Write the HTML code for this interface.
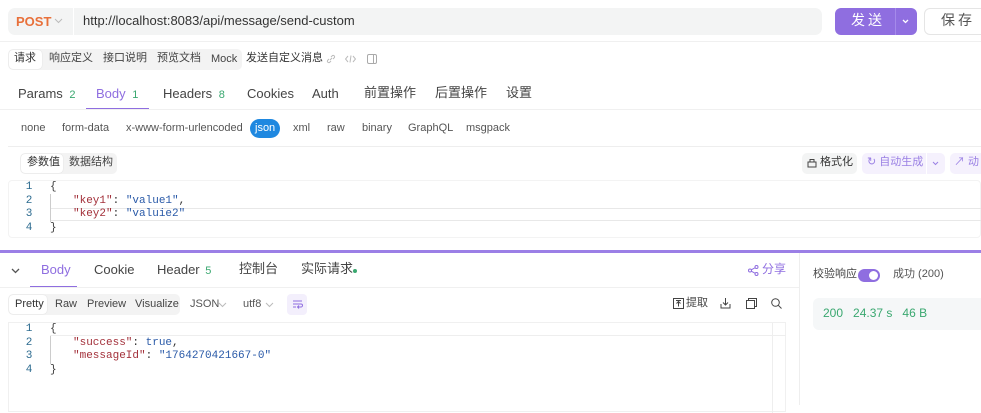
<!DOCTYPE html>
<html><head><meta charset="utf-8"><style>
*{margin:0;padding:0;box-sizing:border-box}
body{width:981px;height:405px;overflow:hidden;background:#fff;font-family:"Liberation Sans","Noto Sans CJK SC",sans-serif;color:#333;position:relative;font-size:12px}
.a{position:absolute;white-space:nowrap;line-height:1.2}
.mono{font-family:"Liberation Mono","DejaVu Sans Mono",monospace;font-size:11px}
.ln{color:#2b6a8f;width:20px;text-align:center}
.k{color:#a3303a}.s{color:#2a5aa8}
.g{color:#3a3a3a}
svg{display:block}
</style></head><body>
<!-- url bar -->
<div class="a" style="left:8px;top:8px;width:814px;height:27px;background:#f3f4f4;border-radius:7px"></div>
<div class="a" style="left:16px;top:14px;font-weight:bold;color:#e8703a;font-size:13px">POST</div>
<svg class="a" style="left:54px;top:18px" width="9" height="6"><path d="M1 1l3.5 3.5L8 1" stroke="#bbb" fill="none"/></svg>
<div class="a" style="left:73px;top:8px;width:1px;height:27px;background:#fff"></div>
<div class="a" style="left:83px;top:13px;font-size:13px;color:#333">http://localhost:8083/api/message/send-custom</div>
<div class="a" style="left:835px;top:8px;width:82px;height:27px;background:#8f6ee0;border-radius:6px"></div>
<div class="a" style="left:895px;top:8px;width:1px;height:27px;background:#a58aea"></div>
<div class="a" style="left:851px;top:12px;color:#fff;font-size:14px;letter-spacing:3px">发送</div>
<svg class="a" style="left:902px;top:19px" width="7" height="5"><path d="M1 1l2.5 2.5L6 1" stroke="#fff" fill="none" stroke-width="1.3"/></svg>
<div class="a" style="left:924px;top:8px;width:70px;height:27px;border:1px solid #e5e5e5;border-radius:6px"></div>
<div class="a" style="left:941px;top:12px;color:#555;font-size:14px;letter-spacing:3px">保存</div>
<div class="a" style="left:0;top:41px;width:981px;height:1px;background:#f0f0f0"></div>
<!-- sub tabs -->
<div class="a" style="left:8px;top:49px;width:234px;height:21px;background:#f3f3f3;border-radius:5px"></div>
<div class="a" style="left:9px;top:50px;width:33px;height:19px;background:#fff;border-radius:4px;box-shadow:0 0 1px #ccc"></div>
<div class="a" style="left:14px;top:52px;font-size:11px">请求</div>
<div class="a" style="left:49px;top:52px;font-size:11px;color:#444">响应定义</div>
<div class="a" style="left:103px;top:52px;font-size:11px;color:#444">接口说明</div>
<div class="a" style="left:157px;top:52px;font-size:11px;color:#444">预览文档</div>
<div class="a" style="left:211px;top:53px;font-size:11px;color:#444">Mock</div>
<div class="a" style="left:246px;top:52px;font-size:11px;color:#333">发送自定义消息</div>
<svg class="a" style="left:326px;top:54px" width="10" height="10"><path d="M4 6l2-2M3 5L1.5 6.5a1.5 1.5 0 0 0 2 2L5 7M7 5l1.5-1.5a1.5 1.5 0 0 0-2-2L5 3" stroke="#bbb" fill="none"/></svg>
<svg class="a" style="left:345px;top:54px" width="11" height="10"><path d="M3 2L0.5 5L3 8M8 2l2.5 3L8 8M6 1.5L5 8.5" stroke="#bbb" fill="none"/></svg>
<div class="a" style="left:367px;top:54px;width:10px;height:10px;border:1px solid #aaa;border-radius:2px"></div>
<div class="a" style="left:373px;top:54px;width:1px;height:10px;background:#aaa"></div>
<!-- main tabs -->
<div class="a" style="left:18px;top:86px;font-size:13px;color:#444">Params <span style="color:#3aa870;font-size:11px;margin-left:3px">2</span></div>
<div class="a" style="left:96px;top:86px;font-size:13px;color:#8f6ee0">Body <span style="color:#3aa870;font-size:11px;margin-left:3px">1</span></div>
<div class="a" style="left:163px;top:86px;font-size:13px;color:#444">Headers <span style="color:#3aa870;font-size:11px;margin-left:3px">8</span></div>
<div class="a" style="left:247px;top:86px;font-size:13px;color:#444">Cookies</div>
<div class="a" style="left:312px;top:86px;font-size:13px;color:#444">Auth</div>
<div class="a" style="left:364px;top:85px;font-size:13px;color:#444">前置操作</div>
<div class="a" style="left:435px;top:85px;font-size:13px;color:#444">后置操作</div>
<div class="a" style="left:506px;top:85px;font-size:13px;color:#444">设置</div>
<div class="a" style="left:86px;top:108px;width:63px;height:2px;background:#8f6ee0"></div>
<div class="a" style="left:0;top:109px;width:981px;height:1px;background:#f0f0f0"></div>
<!-- body types -->
<div class="a" style="left:250px;top:119px;width:30px;height:19px;background:#1f88e0;border-radius:10px"></div>
<div class="a" style="left:21px;top:122px;font-size:11px;color:#555">none</div>
<div class="a" style="left:62px;top:122px;font-size:11px;color:#555">form-data</div>
<div class="a" style="left:126px;top:122px;font-size:11px;color:#555">x-www-form-urlencoded</div>
<div class="a" style="left:255px;top:122px;font-size:11px;color:#fff">json</div>
<div class="a" style="left:293px;top:122px;font-size:11px;color:#555">xml</div>
<div class="a" style="left:327px;top:122px;font-size:11px;color:#555">raw</div>
<div class="a" style="left:362px;top:122px;font-size:11px;color:#555">binary</div>
<div class="a" style="left:408px;top:122px;font-size:11px;color:#555">GraphQL</div>
<div class="a" style="left:466px;top:122px;font-size:11px;color:#555">msgpack</div>
<div class="a" style="left:8px;top:146px;width:973px;height:1px;background:#eee"></div>
<!-- params segmented -->
<div class="a" style="left:20px;top:153px;width:97px;height:21px;background:#f3f3f3;border-radius:5px"></div>
<div class="a" style="left:21px;top:154px;width:42px;height:19px;background:#fff;border-radius:4px;box-shadow:0 0 1px #ccc"></div>
<div class="a" style="left:27px;top:156px;font-size:11px">参数值</div>
<div class="a" style="left:69px;top:156px;font-size:11px;color:#444">数据结构</div>
<div class="a" style="left:802px;top:153px;width:55px;height:21px;background:#f3f4f4;border-radius:5px"></div>
<svg class="a" style="left:807px;top:158px" width="10" height="10"><path d="M1 4h8v5H1zM3 4V1.5h4V4" stroke="#444" fill="none"/></svg>
<div class="a" style="left:820px;top:156px;font-size:11px;color:#333">格式化</div>
<div class="a" style="left:862px;top:153px;width:83px;height:21px;background:#f5f1fd;border-radius:5px"></div>
<div class="a" style="left:867px;top:156px;font-size:11px;color:#9a80e4">↻ 自动生成</div>
<div class="a" style="left:926px;top:153px;width:1px;height:21px;background:#fff"></div>
<svg class="a" style="left:932px;top:161px" width="7" height="5"><path d="M1 1l2.5 2.5L6 1" stroke="#9a80e4" fill="none"/></svg>
<div class="a" style="left:950px;top:153px;width:40px;height:21px;background:#f5f1fd;border-radius:5px"></div>
<div class="a" style="left:954px;top:156px;font-size:11px;color:#9a80e4">↗ 动</div>
<!-- request code -->
<div class="a" style="left:8px;top:180px;width:973px;height:58px;border:1px solid #f3f3f3;border-radius:4px"></div>
<div class="a" style="left:50px;top:208px;width:931px;height:13px;border-top:1px solid #e8e8e8;border-bottom:1px solid #e8e8e8"></div>
<div class="a" style="left:50px;top:194px;width:1px;height:28px;background:#ccc"></div>
<div class="a mono ln" style="left:19px;top:181px">1</div>
<div class="a mono ln" style="left:19px;top:195px">2</div>
<div class="a mono ln" style="left:19px;top:208px">3</div>
<div class="a mono ln" style="left:19px;top:222px">4</div>
<div class="a mono g" style="left:50px;top:181px">{</div>
<div class="a mono" style="left:73px;top:195px"><span class="k">"key1"</span>: <span class="s">"value1"</span>,</div>
<div class="a mono" style="left:73px;top:208px"><span class="k">"key2"</span>: <span class="s">"valuie2"</span></div>
<div class="a mono g" style="left:50px;top:222px">}</div>
<!-- divider -->
<div class="a" style="left:0;top:250px;width:981px;height:3px;background:#9b7fe6"></div>
<!-- response tabs -->
<svg class="a" style="left:11px;top:268px" width="9" height="6"><path d="M1 1l3.5 3.5L8 1" stroke="#555" fill="none" stroke-width="1.3"/></svg>
<div class="a" style="left:41px;top:262px;font-size:13px;color:#8f6ee0">Body</div>
<div class="a" style="left:94px;top:262px;font-size:13px;color:#444">Cookie</div>
<div class="a" style="left:157px;top:262px;font-size:13px;color:#444">Header <span style="color:#3aa870;font-size:11px;margin-left:2px">5</span></div>
<div class="a" style="left:239px;top:261px;font-size:13px;color:#444">控制台</div>
<div class="a" style="left:301px;top:261px;font-size:13px;color:#444">实际请求</div>
<div class="a" style="left:353px;top:269px;width:4px;height:4px;border-radius:50%;background:#3aa870"></div>
<div class="a" style="left:30px;top:286px;width:47px;height:2px;background:#8f6ee0"></div>
<div class="a" style="left:0;top:287px;width:799px;height:1px;background:#f0f0f0"></div>
<svg class="a" style="left:748px;top:265px" width="11" height="11"><circle cx="8.5" cy="2" r="1.5" stroke="#8f6ee0" fill="none"/><circle cx="2" cy="5.5" r="1.5" stroke="#8f6ee0" fill="none"/><circle cx="8.5" cy="9" r="1.5" stroke="#8f6ee0" fill="none"/><path d="M3.3 4.8L7.2 2.7M3.3 6.2l3.9 2.1" stroke="#8f6ee0"/></svg>
<div class="a" style="left:762px;top:262px;font-size:12px;color:#8f6ee0">分享</div>
<div class="a" style="left:799px;top:253px;width:1px;height:152px;background:#eee"></div>
<div class="a" style="left:813px;top:268px;font-size:11px;color:#444">校验响应</div>
<div class="a" style="left:858px;top:269px;width:22px;height:13px;background:#8f6ee0;border-radius:7px"></div>
<div class="a" style="left:869px;top:271px;width:9px;height:9px;background:#fff;border-radius:50%"></div>
<div class="a" style="left:893px;top:268px;font-size:11px;color:#555">成功 (200)</div>
<div class="a" style="left:813px;top:298px;width:180px;height:32px;background:#f5f7f8;border-radius:6px"></div>
<div class="a" style="left:823px;top:306px;font-size:12px;color:#3aa870">200 &nbsp;&nbsp;24.37 s &nbsp;&nbsp;46 B</div>
<!-- response toolbar -->
<div class="a" style="left:8px;top:294px;width:172px;height:21px;background:#f3f3f3;border-radius:5px"></div>
<div class="a" style="left:9px;top:295px;width:38px;height:19px;background:#fff;border-radius:4px;box-shadow:0 0 1px #ccc"></div>
<div class="a" style="left:15px;top:298px;font-size:11px">Pretty</div>
<div class="a" style="left:55px;top:298px;font-size:11px;color:#444">Raw</div>
<div class="a" style="left:87px;top:298px;font-size:11px;color:#444">Preview</div>
<div class="a" style="left:135px;top:298px;font-size:11px;color:#444">Visualize</div>
<div class="a" style="left:190px;top:298px;font-size:11px;color:#555">JSON</div>
<svg class="a" style="left:218px;top:302px" width="9" height="6"><path d="M1 1l3.5 3.5L8 1" stroke="#bbb" fill="none"/></svg>
<div class="a" style="left:243px;top:298px;font-size:11px;color:#555">utf8</div>
<svg class="a" style="left:265px;top:302px" width="9" height="6"><path d="M1 1l3.5 3.5L8 1" stroke="#bbb" fill="none"/></svg>
<div class="a" style="left:287px;top:294px;width:20px;height:21px;background:#f3effc;border-radius:4px"></div>
<svg class="a" style="left:292px;top:300px" width="11" height="9"><path d="M1 1h9M1 4h8a1.5 1.5 0 0 1 0 3H6M1 7h3M7 5.5L5.5 7 7 8.5" stroke="#8f6ee0" fill="none"/></svg>
<svg class="a" style="left:673px;top:298px" width="11" height="11"><rect x="0.5" y="0.5" width="10" height="10" stroke="#444" fill="none"/><path d="M5.5 8.5V3.5M3.5 5.5l2-2 2 2M3 2.5h5" stroke="#444" fill="none"/></svg>
<div class="a" style="left:686px;top:297px;font-size:11px;color:#444">提取</div>
<svg class="a" style="left:720px;top:297px" width="11" height="12"><path d="M5.5 1v7M3 5.5l2.5 2.5L8 5.5M1 7v4h9V7" stroke="#444" fill="none"/></svg>
<svg class="a" style="left:746px;top:298px" width="11" height="11"><rect x="0.5" y="2.5" width="8" height="8" stroke="#444" fill="none"/><path d="M2.5 2.5V0.5h8v8h-2" stroke="#444" fill="none"/></svg>
<svg class="a" style="left:771px;top:298px" width="11" height="11"><circle cx="4.5" cy="4.5" r="3.8" stroke="#444" fill="none"/><path d="M7.3 7.3L10.5 10.5" stroke="#444"/></svg>
<!-- response code -->
<div class="a" style="left:8px;top:322px;width:778px;height:90px;border:1px solid #f0f0f0"></div>
<div class="a" style="left:50px;top:323px;width:736px;height:13px;border-bottom:1px solid #eee"></div>
<div class="a" style="left:772px;top:323px;width:1px;height:90px;background:#eee"></div>
<div class="a" style="left:50px;top:336px;width:1px;height:28px;background:#ccc"></div>
<div class="a mono ln" style="left:19px;top:323px">1</div>
<div class="a mono ln" style="left:19px;top:337px">2</div>
<div class="a mono ln" style="left:19px;top:350px">3</div>
<div class="a mono ln" style="left:19px;top:364px">4</div>
<div class="a mono g" style="left:50px;top:323px">{</div>
<div class="a mono" style="left:73px;top:337px"><span class="k">"success"</span>: <span class="s">true</span>,</div>
<div class="a mono" style="left:73px;top:350px"><span class="k">"messageId"</span>: <span class="s">"1764270421667-0"</span></div>
<div class="a mono g" style="left:50px;top:364px">}</div>
</body></html>
